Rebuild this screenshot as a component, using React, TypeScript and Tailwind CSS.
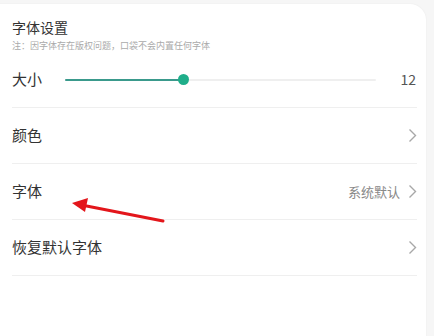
import React from "react";

const font = { fontFamily: '"Noto Sans CJK SC", "Noto Sans", sans-serif' };

function Chevron() {
    return (
        <svg width="9" height="15" viewBox="0 0 9 15" className="shrink-0">
            <path d="M1.5 1.5 L7.5 7.5 L1.5 13.5" fill="none" stroke="#a8a8a8" strokeWidth="1.4" />
        </svg>
    );
}

function Row({ label, value }: { label: string; value?: string }) {
    return (
        <div className="h-[56px] flex items-center border-b border-[#efefef]">
            <span className="flex-1 text-[15px] text-[#333]">{label}</span>
            {value && <span className="text-[13px] text-[#888] mr-[8px]">{value}</span>}
            <Chevron />
        </div>
    );
}

export default function App() {
    const pct = 38;
    return (
        <div className="relative w-[434px] h-[336px] bg-[#f6f6f6] overflow-hidden pt-[4px]" style={font}>
            <div className="h-[340px] mr-[8px] -ml-[20px] bg-white rounded-tr-[16px] shadow-[0_0_2px_rgba(0,0,0,0.06)] pl-[32px] pr-[9px] pt-[14px]">
                <div className="text-[14px] leading-[18px] text-[#333]">字体设置</div>
                <div className="mt-[4px] text-[9px] leading-[12px] text-[#aaa]">注：因字体存在版权问题，口袋不会内置任何字体</div>

                <div className="h-[56px] flex items-center border-b border-[#efefef]">
                    <span className="text-[15px] text-[#333] w-[53px]">大小</span>
                    <div className="relative w-[311px] h-[2px] bg-[#efefef] rounded-full">
                        <div className="h-full bg-[#3a9a8c] rounded-full" style={{ width: `${pct}%` }} />
                        <div
                            className="absolute top-1/2 w-[11px] h-[11px] -mt-[5.5px] -ml-[5.5px] rounded-full bg-[#1fae8a]"
                            style={{ left: `${pct}%` }}
                        />
                    </div>
                    <span className="flex-1 text-right text-[14px] text-[#555] pr-[1px]">12</span>
                </div>

                <Row label="颜色" />
                <Row label="字体" value="系统默认" />
                <Row label="恢复默认字体" />
            </div>

            <svg className="absolute left-0 top-0 pointer-events-none" width="434" height="336">
                <line x1="163" y1="221" x2="84" y2="205.5" stroke="#e3161b" strokeWidth="3" strokeLinecap="round" />
                <polygon points="72,203 88,198 85,212" fill="#e3161b" />
            </svg>
        </div>
    );
}
